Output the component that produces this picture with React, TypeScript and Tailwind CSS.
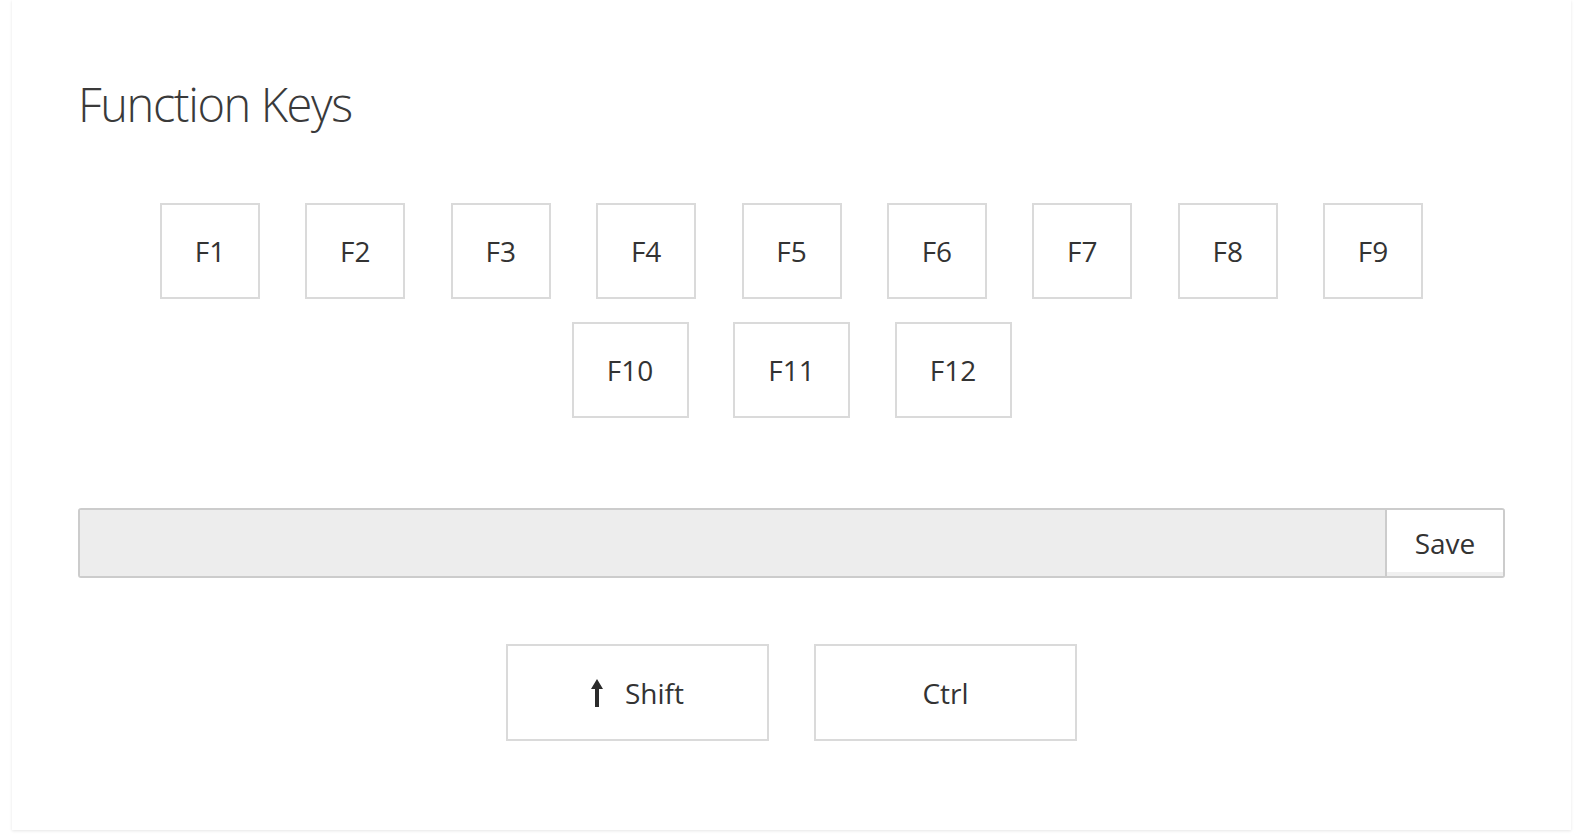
import React from "react";

const row1 = ["F1", "F2", "F3", "F4", "F5", "F6", "F7", "F8", "F9"];
const row2 = ["F10", "F11", "F12"];

function Key({ label, w }: { label: string; w: string }) {
  return (
    <button
      className={`${w} h-[96px] border-2 border-[#dadada] bg-white flex items-center justify-center text-[28px] text-[#333] leading-none`}
    >
      {label}
    </button>
  );
}

function ArrowUp() {
  return (
    <svg width="12" height="28" viewBox="0 0 12 28" className="shrink-0">
      <polygon points="6,0 12,10 8,10 8,28 4,28 4,10 0,10" fill="#2b2b2b" />
    </svg>
  );
}

export default function App() {
  return (
    <div
      className="w-full h-[836px] bg-white overflow-hidden"
      style={{ fontFamily: "'Open Sans', 'Liberation Sans', sans-serif" }}
    >
      <div className="ml-[12px] w-[1559px] h-[830px] bg-white shadow-[0_1px_3px_rgba(0,0,0,0.1)] px-[66px] flex flex-col">
        <h1 className="mt-[80px] text-[47px] leading-[48px] font-extralight text-[#3a3a3a] tracking-[-1.4px]">
          Function Keys
        </h1>

        <div className="mt-[75px] flex justify-center gap-[45.4px]">
          {row1.map((k) => (
            <Key key={k} label={k} w="w-[100px]" />
          ))}
        </div>
        <div className="mt-[23px] flex justify-center gap-[44.5px]">
          {row2.map((k) => (
            <Key key={k} label={k} w="w-[117px]" />
          ))}
        </div>

        <div className="mt-[90px] flex h-[70px] border-2 border-[#cccccc] rounded-[3px] overflow-hidden">
          <input className="flex-1 bg-[#ededed] outline-none" aria-label="keys" />
          <button className="w-[118px] border-l-2 border-[#cccccc] bg-white shadow-[inset_0_-4px_0_#f0f0f0] text-[28px] text-[#333] leading-none flex items-center justify-center">
            Save
          </button>
        </div>

        <div className="mt-[66px] flex justify-center gap-[45px]">
          <button className="w-[263px] h-[97px] border-2 border-[#dadada] bg-white flex items-center justify-center gap-[22px] text-[28px] text-[#333] leading-none">
            <ArrowUp />
            <span>Shift</span>
          </button>
          <button className="w-[263px] h-[97px] border-2 border-[#dadada] bg-white flex items-center justify-center text-[28px] text-[#333] leading-none">
            Ctrl
          </button>
        </div>
      </div>
    </div>
  );
}
